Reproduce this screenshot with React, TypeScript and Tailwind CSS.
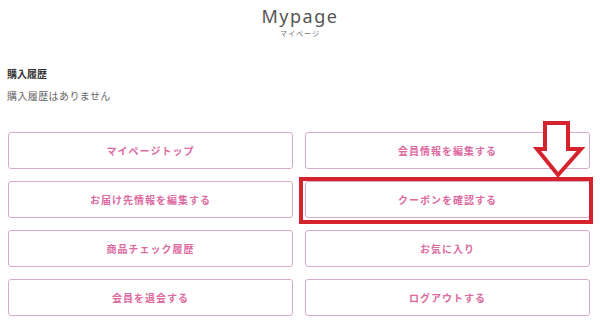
import React from "react";

const items = [
  "マイページトップ",
  "会員情報を編集する",
  "お届け先情報を編集する",
  "クーポンを確認する",
  "商品チェック履歴",
  "お気に入り",
  "会員を退会する",
  "ログアウトする",
];

export default function App() {
  return (
    <div
      className="relative w-[600px] h-[324px] bg-white overflow-hidden"
      style={{ fontFamily: '"Noto Sans", "Noto Sans CJK JP", sans-serif' }}
    >
      <div className="flex flex-col items-center pt-[4px]">
        <div className="text-[18px] leading-[24px] tracking-[1.5px] text-[#555555]" style={{ fontFamily: '"Noto Sans", sans-serif' }}>
          Mypage
        </div>
        <div className="text-[7px] leading-[9px] tracking-[1px] text-[#777777] mt-[1px]" style={{ fontFamily: '"Noto Sans CJK JP", sans-serif' }}>
          マイページ
        </div>
      </div>
      <div className="pl-[7px] mt-[29px]">
        <div className="text-[10px] leading-[14px] font-bold text-[#333333]" style={{ fontFamily: '"Noto Sans CJK JP", sans-serif' }}>
          購入履歴
        </div>
        <div className="text-[10px] leading-[14px] tracking-[0.4px] text-[#666666] mt-[8px]" style={{ fontFamily: '"Noto Sans CJK JP", sans-serif' }}>
          購入履歴はありません
        </div>
      </div>
      <div className="grid grid-cols-2 gap-x-[12px] gap-y-[12px] pl-[8px] pr-[10px] mt-[29px]">
        {items.map((t, i) => (
          <div key={t} className="relative">
            <div
              className="h-[37px] flex items-center justify-center border border-[#d8aacb] rounded-[3px] bg-white text-[10px] font-bold tracking-[1px] text-[#dc6a9f]"
              style={{ fontFamily: '"Noto Sans CJK JP", sans-serif' }}
            >
              {t}
            </div>
            {i === 3 && (
              <div className="absolute -left-[6px] -right-[3px] -top-[4px] -bottom-[6px] border-[4px] border-[#d5232d] pointer-events-none" />
            )}
          </div>
        ))}
      </div>
      <svg
        className="absolute left-[530px] top-[116px]"
        width="60"
        height="66"
        viewBox="0 0 60 66"
      >
        <polygon
          points="15,7 38,7 38,33 51,33 28,59 7,33 15,33"
          fill="white"
          stroke="#d5232d"
          strokeWidth="4"
          strokeLinejoin="miter"
        />
      </svg>
    </div>
  );
}
